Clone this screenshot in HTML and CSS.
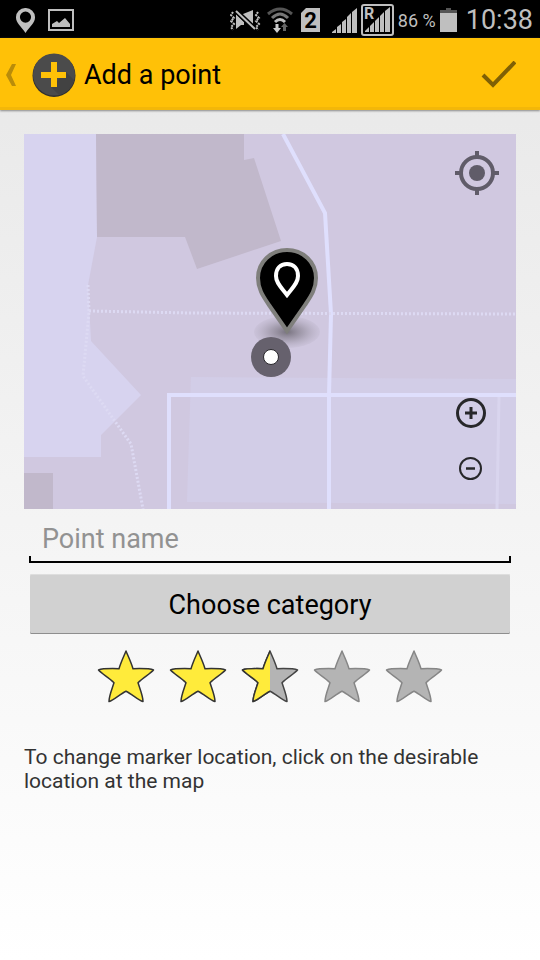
FILE: index.html
```html
<!DOCTYPE html>
<html lang="en">
<head>
<meta charset="utf-8">
<meta name="viewport" content="width=device-width, initial-scale=1">
<title>Add a point</title>
<link rel="stylesheet" href="styles.css">
</head>
<body>
<div class="status-bar">
  <div class="status-left">
    <svg width="19" height="25" viewBox="0 0 19 25"><path fill="#bfbfbf" fill-rule="evenodd" d="M9.500 0A9.300 9.300 0 0 0 0 9.500C0 15 5 18 9.500 25C14 18 19 15 19 9.500A9.300 9.300 0 0 0 9.500 0ZM9.500 3.500A5.600 5.600 0 1 1 9.500 14.700A5.600 5.600 0 1 1 9.500 3.500Z"/></svg>
    <svg width="26" height="22" viewBox="0 0 26 22"><rect x="1" y="1" width="24" height="20" fill="none" stroke="#bfbfbf" stroke-width="2"/><path fill="#bfbfbf" d="M4 18V15L9 12L11 14L17 9L22 15V18Z"/></svg>
  </div>
  <div class="status-right">
    <div class="status-icons">
      <svg width="31" height="22" viewBox="0 0 31 22"><path fill="#bfbfbf" d="M6 5L14 13V16H11L6 20ZM13 5L23 1V17L13 8Z"/><path stroke="#000" stroke-width="5" d="M5 1L26 21"/><path stroke="#bfbfbf" stroke-width="2" d="M6 2L25 20"/><g fill="none" stroke="#bfbfbf" stroke-width="2" stroke-dasharray="2 1"><path d="M3 3L1 6L4 9L1 12L4 15L1 18L3 21M28 3L26 6L29 9L26 12L29 15L26 18L28 21"/></g></svg>
      <svg width="26" height="26" viewBox="0 0 26 26"><g fill="none" stroke-width="3"><path stroke="#555" d="M1 7Q13 -3 25 7"/><path stroke="#777" d="M5 11Q13 3 21 11"/><path stroke="#bfbfbf" d="M8 15Q13 10 18 15"/></g><path fill="#ccc" d="M8.500 17H11.500V21H14L10 26L6 21H8.500Z"/><path fill="#666" d="M16 24H19V20H21L17.500 16L14 20H16Z"/></svg>
      <svg class="sim" width="19" height="24" viewBox="0 0 19 24"><path fill="#bfbfbf" d="M5 0H19V24H0V5Z"/><text x="9.500" y="20" text-anchor="middle" font-size="22" font-weight="700" fill="#000">2</text></svg>
      <svg width="25" height="25" viewBox="0 0 25 25"><path fill="#bfbfbf" d="M0 25V24L4 21V25ZM5 25V19L9 16V25ZM10 25V14L14 11V25ZM15 25V9L19 5V25ZM20 25V4L25 0V25Z"/></svg>
      <svg width="33" height="32" viewBox="0 0 33 32"><rect x="1" y="1" width="31" height="30" rx="2" fill="none" stroke="#bfbfbf" stroke-width="2"/><path fill="#bfbfbf" d="M4 28V27L8 23V28ZM9 28V22L13 18V28ZM14 28V17L18 13V28ZM19 28V12L23 8V28ZM24 28V7L29 3V28Z"/><text x="3" y="15" font-size="16" font-weight="700" fill="#bfbfbf">R</text></svg>
    </div>
    <span class="battery-level">86 %</span>
    <svg width="17" height="24" viewBox="0 0 17 24"><path fill="#555" d="M6 0H11V2H17V5H0V2H6Z"/><path fill="#bfbfbf" d="M0 5H17V24H0Z"/></svg>
    <span class="clock">10:38</span>
  </div>
</div>

<header class="action-bar">
  <button class="up" type="button" aria-label="Back">
    <svg width="10" height="22" viewBox="0 0 10 22"><path fill="#b98c0a" d="M6 0H10L5 11L10 22H6L0 11Z"/></svg>
    <svg width="44" height="44" viewBox="0 0 44 44"><circle cx="22" cy="22.500" r="21.500" fill="#303030"/><circle cx="22" cy="21.500" r="21" fill="#4b4b4b"/><path fill="#424242" d="M34 19L42 27A21 21 0 0 1 27 42L19 34Z"/><path fill="#ffc107" d="M19 9H25V19H34V25H25V34H19V25H9V19H19Z"/></svg>
  </button>
  <h1 class="title">Add a point</h1>
  <button class="done" type="button" aria-label="Done">
    <svg width="36" height="28" viewBox="0 0 36 28"><path fill="none" stroke="#7f6005" stroke-width="4" d="M3 14L13 24L35 1"/></svg>
  </button>
</header>

<main class="content">
  <div class="map">
    <svg class="map-drawing" viewBox="24 134 492 375" role="img" aria-label="Map">
      <defs><radialGradient id="shade"><stop offset="0" stop-color="#77727e" stop-opacity="1"/><stop offset=".5" stop-color="#8d8795" stop-opacity=".6"/><stop offset="1" stop-color="#a9a2b3" stop-opacity=".15"/></radialGradient></defs>
      <path fill="#d0c8e0" d="M24 134H516V509H24Z"/>
      <path fill="#d7d3ef" d="M24 134H96L97 237L88 285L91 341L141 395L101 435V457H24Z"/>
      <path fill="#c1b8cb" d="M96 134H244V160L254 158L281 241L197 269L185 237H97ZM24 473H53V509H24Z"/>
      <path fill="#d2cde7" d="M191 377L516 379V504L187 502Z"/>
      <path fill="none" stroke="#d9d5ee" stroke-width="3" d="M499 396L497 509"/>
      <g fill="none" stroke="#dfdffd" stroke-width="4"><path d="M169 509V395H516"/><path d="M283 134L325 213L331 314L329 395V509"/></g>
      <g fill="none" stroke="#dddaf3" stroke-width="3" stroke-dasharray="2 2"><path d="M88 285L89 312L83 376L131 444L143 509"/><path d="M89 311L190 313L516 314"/></g>
      <ellipse cx="287" cy="332" rx="33" ry="16" fill="url(#shade)"/>
      <path fill="#000" stroke="#7f7f7c" stroke-width="4" d="M287 250C303 250 316 262 316 278C316 289 311 296 305 305L287 331L269 305C263 296 258 289 258 278C258 262 271 250 287 250Z"/>
      <path fill="#000" stroke="#fff" stroke-width="4" d="M287 264C294 264 298 269 298 276C298 283 293 287 287 295C281 287 276 283 276 276C276 269 280 264 287 264Z"/>
      <circle cx="271" cy="357" r="20" fill="#66616d"/>
      <circle cx="271" cy="357" r="7.500" fill="#fff" stroke="#29272c"/>
    </svg>
    <button class="locate" type="button" aria-label="My location">
      <svg width="44" height="44" viewBox="0 0 44 44"><circle cx="22" cy="22" r="16" fill="none" stroke="#605c69" stroke-width="4"/><circle cx="22" cy="22" r="8" fill="#605c69"/><path stroke="#605c69" stroke-width="4" d="M22 0V6M22 38V44M0 22H6M38 22H44"/></svg>
    </button>
    <div class="zoom-controls">
      <button type="button" aria-label="Zoom in">
        <svg width="30" height="30" viewBox="0 0 30 30"><circle cx="15" cy="15" r="13.500" fill="none" stroke="#27272a" stroke-width="3"/><path stroke="#27272a" stroke-width="3" d="M15 9V21M9 15H21"/></svg>
      </button>
      <button type="button" aria-label="Zoom out">
        <svg width="24" height="24" viewBox="0 0 24 24"><circle cx="11.500" cy="12.500" r="10.500" fill="none" stroke="#27272a" stroke-width="2"/><path stroke="#27272a" stroke-width="2.500" d="M7 12.500H16"/></svg>
      </button>
    </div>
  </div>

  <form class="form">
    <div class="field">
      <input class="name" type="text" placeholder="Point name" aria-label="Point name">
    </div>
    <button class="category" type="button">Choose category</button>
    <div class="rating">
      <svg class="stars" width="360" height="56" viewBox="0 0 360 56" aria-hidden="true">
        <defs>
          <path id="star" d="M36 3C38 8 41 14 43 20.700C50 20.500 60 20.500 63.500 22C60 26 53 29.500 48 34.700C50 41 53 48 53 53.500C48 52 42 46 36 43.200C30 46 24 52 19 53.500C19 48 22 41 24 34.700C19 29.500 12 26 8.500 22C12 20.500 22 20.500 29 20.700C31 14 34 8 36 3Z"/>
          <clipPath id="left-half"><path d="M0 0H36V56H0Z"/></clipPath>
        </defs>
        <g stroke-width="1.500" stroke-linejoin="round">
          <use href="#star" fill="#ffeb3b" stroke="#333"/>
          <use href="#star" x="72" fill="#ffeb3b" stroke="#333"/>
          <g transform="translate(144 0)"><use href="#star" fill="#b4b4b4" stroke="#444"/><g clip-path="url(#left-half)"><use href="#star" fill="#ffeb3b" stroke="#333"/></g></g>
          <use href="#star" x="216" fill="#b4b4b4" stroke="#868686"/>
          <use href="#star" x="288" fill="#b4b4b4" stroke="#868686"/>
        </g>
      </svg>
      <input class="rating-input" type="range" min="0" max="5" step="0.5" value="2.5" aria-label="Rating">
    </div>
  </form>
  <p class="hint">To change marker location, click on the desirable location at the map</p>
</main>
</body>
</html>
```
FILE: styles.css
```css
* {
  box-sizing: border-box;
}

body {
  margin: 0;
  min-height: 100vh;
  font-family: Roboto, "Liberation Sans", sans-serif;
  color: #000;
  background: linear-gradient(#e7e7e7, #fff);
}

button {
  margin: 0;
  padding: 0;
  border: 0;
  background: none;
  font: inherit;
  color: inherit;
}

svg {
  display: block;
  flex: none;
}

.status-bar {
  display: flex;
  align-items: center;
  justify-content: space-between;
  height: 38px;
  padding: 2px 7px 0 16px;
  background: #000;
  color: #bfbfbf;
  white-space: nowrap;
}

.status-left {
  display: flex;
  align-items: center;
  gap: 13px;
}

.status-right {
  display: flex;
  align-items: center;
  gap: 4px;
}

.status-icons {
  display: flex;
  align-items: center;
  gap: 4px;
}

.status-icons > :first-child {
  margin-right: 2px;
}

.sim {
  margin: 0 8px 0 4px;
}

.battery-level {
  font-size: 18px;
}

.clock {
  margin-left: 5px;
  font-size: 27px;
}

.action-bar {
  display: flex;
  align-items: center;
  height: 72px;
  padding: 2px 24px 0 6px;
  background: #ffc107;
  box-shadow: inset 0 -3px #f3b709, 0 1px 2px #888;
}

.up {
  display: flex;
  align-items: center;
  gap: 16px;
}

.title {
  flex: 1;
  margin: 0 8px;
  font-size: 27px;
  font-weight: 400;
}

.content {
  padding: 24px;
}

.map {
  position: relative;
}

.map-drawing {
  width: 100%;
  height: auto;
}

.locate {
  position: absolute;
  top: 17px;
  right: 17px;
}

.zoom-controls {
  position: absolute;
  right: 30px;
  bottom: 29px;
  display: flex;
  flex-direction: column;
  align-items: center;
  gap: 28px;
}

.form {
  padding: 0 5px;
}

.field {
  height: 54px;
  background:
    linear-gradient(#000, #000) left bottom / 2px 7px no-repeat,
    linear-gradient(#000, #000) right bottom / 2px 7px no-repeat,
    linear-gradient(#000, #000) left bottom / 100% 2px no-repeat;
}

.name {
  width: 100%;
  height: 60px;
  padding: 0 13px;
  border: 0;
  outline: 0;
  background: none;
  font: inherit;
  font-size: 27px;
}

.name::placeholder {
  color: #929292;
  opacity: 1;
}

.category {
  display: block;
  width: 100%;
  height: 60px;
  margin-top: 11px;
  padding-top: 2px;
  border: 0 solid transparent;
  border-width: 0 1px;
  border-radius: 2px;
  background: #d1d1d1 padding-box;
  box-shadow: inset 0 1px #dedede, inset 0 -1px #8e8e8e;
  font-size: 27px;
}

.rating {
  position: relative;
  width: 360px;
  margin: 14px auto 0;
}

.rating-input {
  position: absolute;
  inset: 0;
  width: 100%;
  height: 100%;
  margin: 0;
  opacity: 0;
}

.hint {
  margin: 41px 0 0;
  font-size: 21px;
  line-height: 24px;
  color: #333;
}
```
